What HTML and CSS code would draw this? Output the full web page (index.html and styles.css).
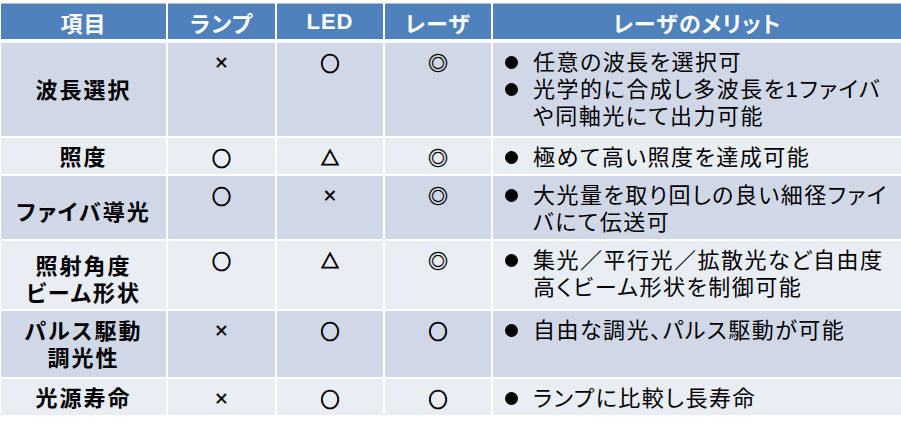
FILE: index.html
```html
<!DOCTYPE html>
<html lang="ja">
<head>
<meta charset="utf-8">
<link rel="stylesheet" href="styles.css">
</head>
<body>
<div class="table">
  <div class="th">項目</div>
  <div class="th">ランプ</div>
  <div class="th">LED</div>
  <div class="th">レーザ</div>
  <div class="th">レーザのメリット</div>

  <div class="cell item band1">波長選択</div>
  <div class="cell sym cross band1">×</div>
  <div class="cell sym band1">○</div>
  <div class="cell sym dbl band1">◎</div>
  <div class="cell note band1">
    <ul class="bullets">
      <li>任意の波長を選択可</li>
      <li>光学的に合成し多波長を1ファイバ<br>や同軸光にて出力可能</li>
    </ul>
  </div>

  <div class="cell item band2">照度</div>
  <div class="cell sym band2">○</div>
  <div class="cell sym tri band2">△</div>
  <div class="cell sym dbl band2">◎</div>
  <div class="cell note band2">
    <ul class="bullets"><li>極めて高い照度を達成可能</li></ul>
  </div>

  <div class="cell item band1 low">ファイバ導光</div>
  <div class="cell sym band1">○</div>
  <div class="cell sym cross band1">×</div>
  <div class="cell sym dbl band1">◎</div>
  <div class="cell note band1">
    <ul class="bullets"><li>大光量を取り回しの良い細径ファイ<br>バにて伝送可</li></ul>
  </div>

  <div class="cell item band2 low">照射角度<br>ビーム形状</div>
  <div class="cell sym band2">○</div>
  <div class="cell sym tri band2">△</div>
  <div class="cell sym dbl band2">◎</div>
  <div class="cell note band2">
    <ul class="bullets"><li>集光／平行光／拡散光など自由度<br>高くビーム形状を制御可能</li></ul>
  </div>

  <div class="cell item band1">パルス駆動<br>調光性</div>
  <div class="cell sym cross band1">×</div>
  <div class="cell sym band1">○</div>
  <div class="cell sym band1">○</div>
  <div class="cell note band1">
    <ul class="bullets"><li>自由な調光、パルス駆動が可能</li></ul>
  </div>

  <div class="cell item band2">光源寿命</div>
  <div class="cell sym cross band2">×</div>
  <div class="cell sym band2">○</div>
  <div class="cell sym band2">○</div>
  <div class="cell note band2">
    <ul class="bullets"><li>ランプに比較し長寿命</li></ul>
  </div>
</div>
</body>
</html>
```
FILE: styles.css
```css
html, body {
  margin: 0;
  padding: 0;
  background: #ffffff;
}

body {
  font-family: "Liberation Sans", "Noto Sans CJK JP", sans-serif;
  color: #000000;
}

.table {
  margin: 3px 0 0 1px;
  width: 900px;
  display: grid;
  grid-template-columns: 165px 107px 106px 106px 408px;
  grid-template-rows: 38px 93px 36px 63px 68px 66px 36px;
  column-gap: 2px;
  row-gap: 2px;
}

.th {
  margin-bottom: 2px;
  background: #4f81bd;
  border-top: 1px solid #a9bedc;
  color: #ffffff;
  font-size: 22px;
  font-weight: bold;
  display: flex;
  align-items: center;
  justify-content: center;
  letter-spacing: 1px;
  font-feature-settings: "palt";
  white-space: nowrap;
}

.cell {
  box-sizing: border-box;
  font-size: 22px;
  line-height: 27px;
  white-space: nowrap;
}

.band1 { background: #d0d8e8; }
.band2 { background: #e9edf4; }

.item {
  display: flex;
  align-items: center;
  justify-content: center;
  text-align: center;
  font-weight: bold;
  letter-spacing: 2px;
  padding-top: 2px;
  font-feature-settings: "palt";
}

.item.low {
  padding-top: 10px;
}

.sym {
  text-align: center;
  padding-top: 6px;
  font-family: "Noto Sans CJK JP", sans-serif;
  font-size: 19px;
  font-weight: bold;
  -webkit-text-stroke: 0.9px #000000;
}

.sym.dbl {
  font-size: 20px;
  -webkit-text-stroke: 0.35px #000000;
}

.sym.cross {
  font-family: "Liberation Sans", sans-serif;
  font-size: 22px;
  font-weight: normal;
  -webkit-text-stroke: 0.4px #000000;
}

.sym.tri {
  font-size: 18px;
}

.note {
  padding: 6px 0 0 12px;
  letter-spacing: 1.5px;
  font-feature-settings: "palt";
}

.bullets {
  list-style: none;
  margin: 0;
  padding: 0;
}

.bullets li {
  position: relative;
  padding-left: 28px;
}

.bullets li::before {
  content: "";
  position: absolute;
  left: 0;
  top: 7px;
  width: 13px;
  height: 13px;
  border-radius: 50%;
  background: #000000;
}
```
